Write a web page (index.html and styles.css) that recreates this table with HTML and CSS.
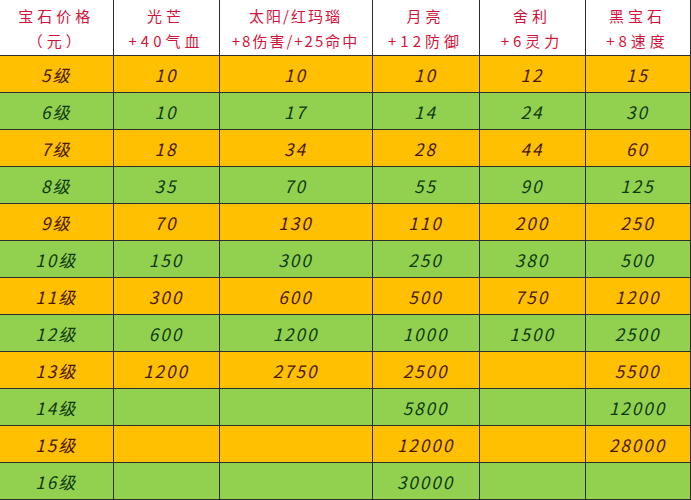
FILE: index.html
```html
<!DOCTYPE html>
<html lang="zh">
<head>
<meta charset="utf-8">
<link rel="stylesheet" href="styles.css">
</head>
<body>
<table class="gems">
<colgroup>
<col class="c1"><col class="c2"><col class="c3"><col class="c4"><col class="c5"><col class="c6">
</colgroup>
<thead>
<tr class="head">
<th>宝石价格<br>（元）</th>
<th>光芒<br>+40气血</th>
<th class="long">太阳/红玛瑙<br>+8伤害/+25命中</th>
<th>月亮<br>+12防御</th>
<th>舍利<br>+6灵力</th>
<th>黑宝石<br>+8速度</th>
</tr>
</thead>
<tbody>
<tr class="o"><td>5级</td><td>10</td><td>10</td><td>10</td><td>12</td><td>15</td></tr>
<tr class="g"><td>6级</td><td>10</td><td>17</td><td>14</td><td>24</td><td>30</td></tr>
<tr class="o"><td>7级</td><td>18</td><td>34</td><td>28</td><td>44</td><td>60</td></tr>
<tr class="g"><td>8级</td><td>35</td><td>70</td><td>55</td><td>90</td><td>125</td></tr>
<tr class="o"><td>9级</td><td>70</td><td>130</td><td>110</td><td>200</td><td>250</td></tr>
<tr class="g"><td>10级</td><td>150</td><td>300</td><td>250</td><td>380</td><td>500</td></tr>
<tr class="o"><td>11级</td><td>300</td><td>600</td><td>500</td><td>750</td><td>1200</td></tr>
<tr class="g"><td>12级</td><td>600</td><td>1200</td><td>1000</td><td>1500</td><td>2500</td></tr>
<tr class="o"><td>13级</td><td>1200</td><td>2750</td><td>2500</td><td></td><td>5500</td></tr>
<tr class="g"><td>14级</td><td></td><td></td><td>5800</td><td></td><td>12000</td></tr>
<tr class="o"><td>15级</td><td></td><td></td><td>12000</td><td></td><td>28000</td></tr>
<tr class="g"><td>16级</td><td></td><td></td><td>30000</td><td></td><td></td></tr>
</tbody>
</table>
</body>
</html>
```
FILE: styles.css
```css
html, body {
  margin: 0;
  padding: 0;
  background: #ffffff;
}
body {
  font-family: "Noto Sans CJK SC", "DejaVu Sans", sans-serif;
  width: 691px;
  height: 500px;
  overflow: hidden;
}
.gems {
  border-collapse: collapse;
  table-layout: fixed;
  width: 690px;
}
.c1 { width: 113px; }
.c2 { width: 106px; }
.c3 { width: 153px; }
.c4 { width: 107px; }
.c5 { width: 106px; }
.c6 { width: 105px; }
.gems th,
.gems td {
  border: 1px solid #2d2d2d;
  text-align: center;
  padding: 0;
  overflow: hidden;
  white-space: nowrap;
}
.gems tr:first-child th { border-top: none; }
.gems th:first-child,
.gems td:first-child { border-left: none; }
.head th {
  height: 55px;
  background: #ffffff;
  color: #d2143c;
  font-weight: normal;
  font-size: 15px;
  line-height: 25px;
  letter-spacing: 4px;
}
.head th.long {
  letter-spacing: 2px;
}
.gems td {
  height: 36px;
  font-size: 17px;
  font-style: italic;
  letter-spacing: 2px;
}
.o td {
  background: #fec000;
  color: #4a1800;
}
.g td {
  background: #92d050;
  color: #0d3a10;
}
```
